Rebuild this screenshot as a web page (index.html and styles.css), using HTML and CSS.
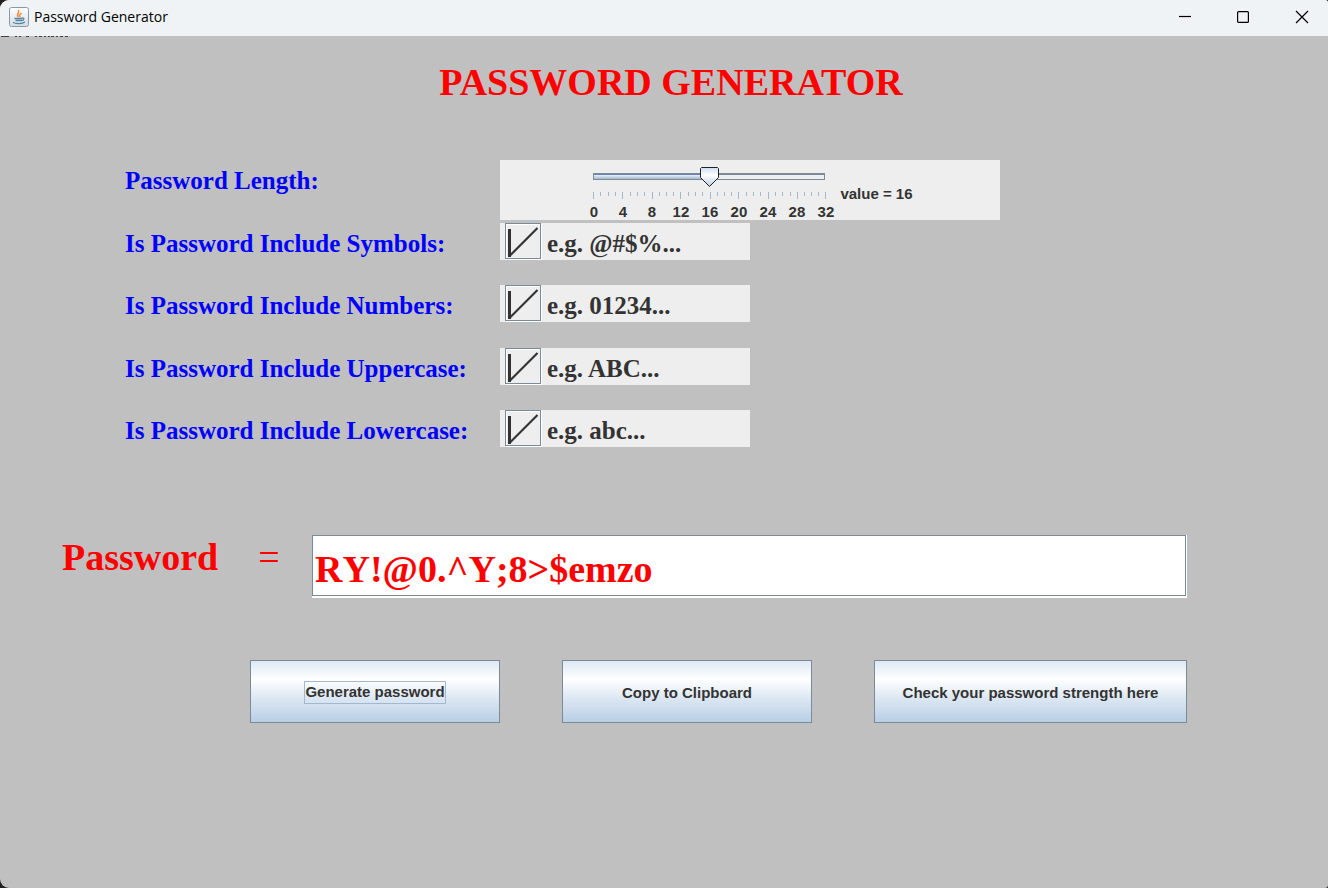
FILE: index.html
```html
<!DOCTYPE html>
<html lang="en">
<head>
<meta charset="utf-8">
<title>Password Generator</title>
<link rel="stylesheet" href="styles.css">
</head>
<body>
<div class="window">
<header class="titlebar">
  <svg class="app-icon" viewBox="0 0 20 20" aria-hidden="true">
    <defs><linearGradient id="tile" x1="0" y1="0" x2="0" y2="1"><stop offset="0" stop-color="#fff"/><stop offset="1" stop-color="#d3dce4"/></linearGradient></defs>
    <rect x=".5" y=".5" width="19" height="19" rx="2" fill="url(#tile)" stroke="#8799ab"/>
    <path d="M9.500 10C6.500 7.500 11 6 9.500 3M11.500 10C9.500 8.500 11 7.500 12.500 6" fill="none" stroke="#f0883a" stroke-width="1.500"/>
    <path d="M5.500 11.500h7.500M6.500 13.500h6M4 15.500c3 1.500 9 1.500 12-.5M13 11c3-.5 2 2.500-.5 2.500" fill="none" stroke="#5382a1" stroke-width="1.300"/>
  </svg>
  <span class="caption">Password Generator</span>
  <button class="win-btn" aria-label="Minimize"><svg viewBox="0 0 12 12"><path d="M0 5.500h12"/></svg></button>
  <button class="win-btn" aria-label="Maximize"><svg viewBox="0 0 12 12"><rect x=".6" y=".6" width="10.800" height="10.800" rx="1"/></svg></button>
  <button class="win-btn close" aria-label="Close"><svg viewBox="0 0 12 12"><path d="M0 0l12 12M12 0L0 12"/></svg></button>
</header>
<main class="content">
  <svg class="sliver" viewBox="0 0 70 2" aria-hidden="true"><path d="M1 .5h8M15 .5h2M19 .5h2M26 .5h3M35 .5h2M39 .5h3M44 .5h2M48 .5h2M51 .5h3M56 .5h2M60 .5h3M65 .5h3"/></svg>
  <h1 class="title">PASSWORD GENERATOR</h1>
  <div class="options">
    <label class="name" for="length">Password Length:</label>
    <div class="panel length-panel">
      <div class="slider">
        <input class="range" id="length" type="range" min="0" max="32" value="16">
        <svg class="ticks" viewBox="0 0 234 8" aria-hidden="true">
          <path d="M7.500 0v4M15.500 0v4M22.500 0v4M37.500 0v4M44.500 0v4M51.500 0v4M66.500 0v4M73.500 0v4M80.500 0v4M95.500 0v4M102.500 0v4M109.500 0v4M124.500 0v4M131.500 0v4M138.500 0v4M153.500 0v4M160.500 0v4M167.500 0v4M182.500 0v4M189.500 0v4M197.500 0v4M211.500 0v4M218.500 0v4M225.500 0v4M.5 0v7M29.500 0v7M59.500 0v7M87.500 0v7M117.500 0v7M145.500 0v7M175.500 0v7M204.500 0v7M232.500 0v7"/>
        </svg>
        <div class="scale"><span>0</span><span>4</span><span>8</span><span>12</span><span>16</span><span>20</span><span>24</span><span>28</span><span>32</span></div>
      </div>
      <output class="value" for="length">value = 16</output>
    </div>

    <label class="name" for="symbols">Is Password Include Symbols:</label>
    <label class="panel check"><input class="box" id="symbols" type="checkbox" checked><svg class="mark" viewBox="0 0 36 36" aria-hidden="true"><path d="M4.500 6v28" stroke-width="3"/><path d="M5 32.500L32.500 5" stroke-width="2.200"/></svg><span>e.g. @#$%...</span></label>

    <label class="name" for="numbers">Is Password Include Numbers:</label>
    <label class="panel check"><input class="box" id="numbers" type="checkbox" checked><svg class="mark" viewBox="0 0 36 36" aria-hidden="true"><path d="M4.500 6v28" stroke-width="3"/><path d="M5 32.500L32.500 5" stroke-width="2.200"/></svg><span>e.g. 01234...</span></label>

    <label class="name" for="uppercase">Is Password Include Uppercase:</label>
    <label class="panel check"><input class="box" id="uppercase" type="checkbox" checked><svg class="mark" viewBox="0 0 36 36" aria-hidden="true"><path d="M4.500 6v28" stroke-width="3"/><path d="M5 32.500L32.500 5" stroke-width="2.200"/></svg><span>e.g. ABC...</span></label>

    <label class="name" for="lowercase">Is Password Include Lowercase:</label>
    <label class="panel check"><input class="box" id="lowercase" type="checkbox" checked><svg class="mark" viewBox="0 0 36 36" aria-hidden="true"><path d="M4.500 6v28" stroke-width="3"/><path d="M5 32.500L32.500 5" stroke-width="2.200"/></svg><span>e.g. abc...</span></label>
  </div>

  <div class="result">
    <label class="result-label" for="password"><span>Password</span><span class="equals">=</span></label>
    <div class="field-edge"><input class="field" id="password" type="text" value="RY!@0.^Y;8&gt;$emzo"></div>
  </div>

  <div class="actions">
    <button class="action"><span class="focused">Generate password</span></button>
    <button class="action">Copy to Clipboard</button>
    <button class="action wide">Check your password strength here</button>
  </div>
</main>
</div>
</body>
</html>
```
FILE: styles.css
```css
* { box-sizing: border-box; }
body {
  margin: 0;
  background: #202020;
  font-kerning: none;
}
.window {
  display: flex;
  flex-direction: column;
  min-height: 100vh;
  overflow: hidden;
  border-radius: 9px 3px 3px 9px;
  background: #c0c0c0;
}
.titlebar {
  display: flex;
  align-items: center;
  height: 36px;
  padding-left: 9px;
  padding-bottom: 2px;
  background: #eff3f6;
}
.app-icon { width: 20px; height: 20px; }
.caption {
  flex: 1;
  margin-left: 5px;
  font: 14px/20px "Open Sans", "Noto Sans", sans-serif;
  color: #000;
}
.win-btn {
  display: flex;
  justify-content: center;
  align-items: center;
  width: 58px;
  height: 34px;
  padding: 0;
  border: 0;
  background: none;
}
.close { width: 52px; margin-left: 4px; }
.win-btn svg {
  width: 12px;
  height: 12px;
  overflow: visible;
  fill: none;
  stroke: #000;
  stroke-width: 1.2;
}
.content { flex: 1; }
.sliver {
  display: block;
  width: 70px;
  height: 2px;
  stroke: #444;
}
.title {
  margin: 0;
  padding: 23px 0 0 14px;
  font: bold 38px/42px "Liberation Serif", serif;
  text-align: center;
  color: #f00;
}
.options {
  display: grid;
  grid-template-columns: 375px 1fr;
  grid-template-rows: 63px 62px 63px 62px 38px;
  align-items: start;
  justify-items: start;
  margin-top: 57px;
  padding-left: 125px;
}
.name {
  font: bold 25px/42px "Liberation Serif", serif;
  color: #00f;
}
.panel { background: #eee; color: #333; }
.length-panel {
  display: flex;
  justify-content: center;
  gap: 8px;
  width: 500px;
  height: 60px;
  padding-top: 6px;
  font: bold 15px/16px "Liberation Sans", sans-serif;
}
.slider { display: flex; flex-direction: column; width: 245px; }
.range {
  width: 232px;
  height: 20px;
  margin: 0 0 0 6px;
  appearance: none;
  background: none;
}
.range::-webkit-slider-runnable-track {
  height: 7px;
  border: 1px solid #7a8a99;
  background: linear-gradient(90deg, #6382bf 50%, #7a8a99 50%) top / 100% 1px no-repeat,
    linear-gradient(#fff, #a3b8cc) left / 50% 100% no-repeat, #eee;
}
.range::-webkit-slider-thumb {
  appearance: none;
  width: 19px;
  height: 20px;
  margin-top: -7px;
  border: 0;
  background: url("data:image/svg+xml,%3Csvg xmlns='http://www.w3.org/2000/svg' viewBox='0 0 19 20'%3E%3Cdefs%3E%3ClinearGradient id='g' x2='0' y2='1'%3E%3Cstop stop-color='%23c8ddf2'/%3E%3Cstop offset='.4' stop-color='white'/%3E%3Cstop offset='1' stop-color='%23b8cfe5'/%3E%3C/linearGradient%3E%3C/defs%3E%3Cpath d='M1.500 .5h16l1 1v9l-9 9-9-9v-9z' fill='url(%23g)' stroke='%23222'/%3E%3C/svg%3E");
}
.ticks {
  width: 234px;
  height: 8px;
  margin: 6px 0 0 6px;
  fill: none;
  stroke: #a3b8cc;
}
.scale {
  display: grid;
  grid-template-columns: repeat(9, 29px);
  margin: 4px 0 0 -8px;
  text-align: center;
}
.value { padding-top: 20px; }
.check {
  position: relative;
  display: flex;
  gap: 6px;
  width: 250px;
  height: 37px;
  padding-left: 5px;
  font: bold 25px/42px "Liberation Serif", serif;
}
.box {
  width: 36px;
  height: 36px;
  margin: 0;
  appearance: none;
  border: 1px solid #7a8a99;
  background: #eee;
  box-shadow: inset 1px 1px #fff, 1px 1px #fff;
}
.mark {
  position: absolute;
  left: 5px;
  width: 36px;
  height: 36px;
  fill: none;
  stroke: #333;
}
.box:not(:checked) + .mark { display: none; }
.result {
  display: flex;
  align-items: flex-start;
  margin-top: 87px;
  padding: 0 141px 0 62px;
}
.result-label {
  display: flex;
  gap: 40px;
  width: 250px;
  font: bold 38px/44px "Liberation Serif", serif;
  color: #f00;
}
.equals { font-weight: normal; }
.field-edge {
  flex: 1;
  display: flex;
  padding: 0 1px 2px 0;
  background: #fff;
}
.field {
  width: 100%;
  height: 61px;
  padding: 6px 2px 0;
  border: 1px solid #7a8a99;
  border-radius: 0;
  background: #fff;
  font: bold 38px/42px "Liberation Serif", serif;
  font-kerning: none;
  color: #f00;
  outline: 0;
}
.actions {
  display: flex;
  gap: 62px;
  margin-top: 62px;
  padding-left: 250px;
}
.action {
  display: flex;
  align-items: center;
  justify-content: center;
  width: 250px;
  height: 63px;
  padding: 2px 0 0;
  border: 1px solid #7a8a99;
  background: linear-gradient(#dde8f3, #fff 30%, #dde8f3 60%, #b8cfe5);
  font: bold 15px/20px "Liberation Sans", sans-serif;
  color: #333;
}
.wide { width: 313px; }
.focused {
  padding-bottom: 1px;
  border: 1px solid #a3b8cc;
}
```
